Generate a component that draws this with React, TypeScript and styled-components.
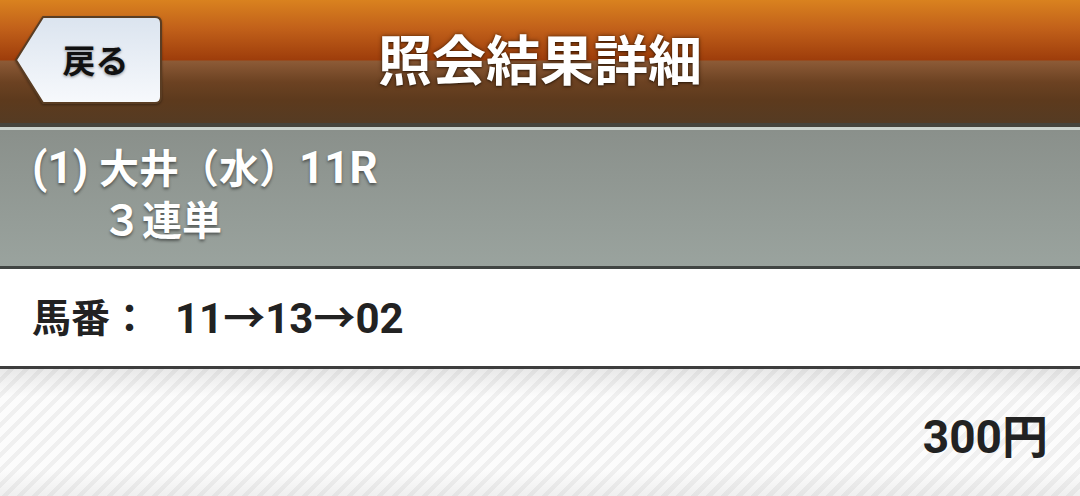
import React from "react";
import styled, { createGlobalStyle } from "styled-components";

const GlobalStyle = createGlobalStyle`
  html, body {
    margin: 0;
    padding: 0;
    background: #ffffff;
  }
  body {
    font-family: Roboto, "Noto Sans CJK JP", "Noto Sans", sans-serif;
    font-weight: 700;
  }
  * { box-sizing: border-box; }
`;

const Page = styled.div`
  width: 1080px;
  height: 496px;
  display: flex;
  flex-direction: column;
  overflow: hidden;
`;

const Header = styled.header`
  height: 127px;
  display: grid;
  grid-template-columns: 1fr auto 1fr;
  align-items: center;
  background: linear-gradient(
    to bottom,
    #d9821f 0px,
    #c2611a 28px,
    #9e3d0b 60px,
    #8d5b37 61px,
    #6c4222 82px,
    #5d3a1d 100px,
    #553b23 123px
  );
  border-bottom: 4px solid #46443c;
`;

const BackButton = styled.button`
  position: relative;
  justify-self: start;
  margin-left: 15px;
  margin-top: -4px;
  width: 147px;
  height: 88px;
  border: none;
  background: transparent;
  padding: 0 0 0 14px;
  display: flex;
  align-items: center;
  justify-content: center;
  cursor: pointer;
  font-family: "Noto Sans CJK JP", sans-serif;
  font-weight: 700;
  font-size: 33px;
  color: #111111;
  text-shadow: 0 1px 3px rgba(0, 0, 0, 0.45);
`;

const ButtonShape = styled.svg`
  position: absolute;
  inset: 0;
  width: 100%;
  height: 100%;
  filter: drop-shadow(0 1px 1px rgba(0, 0, 0, 0.35));
`;

const ButtonLabel = styled.span`
  position: relative;
  line-height: 1;
`;

const Title = styled.h1`
  margin: -7px 0 0 0;
  font-family: "Noto Sans CJK JP", sans-serif;
  font-weight: 700;
  font-size: 54px;
  line-height: 1;
  color: #ffffff;
  text-shadow: 0 0 4px rgba(40, 20, 0, 0.7), 0 1px 2px rgba(0, 0, 0, 0.5);
`;

const RaceInfo = styled.section`
  height: 142px;
  border-top: 3px solid #ccd3cd;
  border-bottom: 3px solid #414543;
  background: linear-gradient(to bottom, #8a908b, #9aa39e);
  padding: 12px 0 0 32px;
  color: #ffffff;
  font-size: 40px;
  line-height: 52px;
  text-shadow: 0 2px 3px rgba(0, 0, 0, 0.45);
`;

const InfoLine = styled.div<{ $indent?: number }>`
  padding-left: ${(p) => p.$indent ?? 0}px;
  white-space: pre;
`;

const Latin = styled.span`
  font-size: 44px;
`;

const NumberRow = styled.section`
  height: 100px;
  border-bottom: 3px solid #3d3d3d;
  background: #ffffff;
  display: flex;
  align-items: center;
  padding: 0 0 6px 32px;
  color: #222222;
  font-size: 39px;
`;

const RowLabel = styled.span`
  font-family: "Noto Sans CJK JP", sans-serif;
`;

const RowValue = styled.span`
  margin-left: 26px;
  font-size: 42px;
`;

const Amount = styled.section`
  flex: 1;
  display: flex;
  align-items: center;
  justify-content: flex-end;
  padding-right: 32px;
  color: #222222;
  font-size: 46px;
  background:
    linear-gradient(
      to bottom,
      rgba(0, 0, 0, 0.08) 0px,
      rgba(0, 0, 0, 0) 28px,
      rgba(0, 0, 0, 0) 100px,
      rgba(0, 0, 0, 0.05) 127px
    ),
    repeating-linear-gradient(
      135deg,
      #fcfcfc 0px,
      #fcfcfc 6px,
      #f0f0f0 6px,
      #f0f0f0 10.6px
    );
`;

export default function App() {
  return (
    <>
      <GlobalStyle />
      <Page>
        <Header>
          <BackButton type="button">
            <ButtonShape viewBox="0 0 147 88" preserveAspectRatio="none">
              <defs>
                <linearGradient id="btnFill" x1="0" y1="0" x2="0" y2="1">
                  <stop offset="0" stopColor="#dbe4ef" />
                  <stop offset="1" stopColor="#f7f9fc" />
                </linearGradient>
              </defs>
              <path
                d="M28 1 H140 Q146 1 146 7 V81 Q146 87 140 87 H28 L1 44 Z"
                fill="url(#btnFill)"
                stroke="#5a3d23"
                strokeWidth="2"
                strokeLinejoin="round"
              />
            </ButtonShape>
            <ButtonLabel>戻る</ButtonLabel>
          </BackButton>
          <Title>照会結果詳細</Title>
          <div />
        </Header>
        <RaceInfo>
          <InfoLine>
            <Latin>(1) </Latin>大井（水）<Latin>11R</Latin>
          </InfoLine>
          <InfoLine $indent={70}>３連単</InfoLine>
        </RaceInfo>
        <NumberRow>
          <RowLabel>馬番：</RowLabel>
          <RowValue>11→13→02</RowValue>
        </NumberRow>
        <Amount>300円</Amount>
      </Page>
    </>
  );
}
